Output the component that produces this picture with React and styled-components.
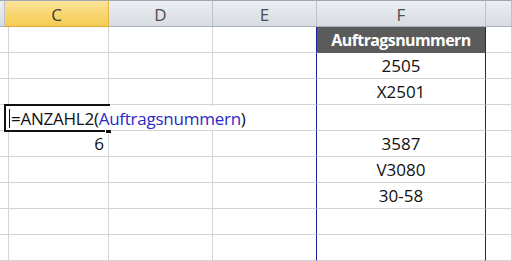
import React from 'react';
import styled, { createGlobalStyle } from 'styled-components';

const GlobalStyle = createGlobalStyle`
  html, body {
    margin: 0;
    padding: 0;
    background: #ffffff;
  }
  * {
    box-sizing: border-box;
  }
`;

const COLS = ['5px', '104px', '104px', '104px', '169px', '26px'];

const Sheet = styled.div`
  width: 512px;
  height: 261px;
  overflow: hidden;
  font-family: 'Open Sans', 'Liberation Sans', sans-serif;
  position: relative;
  background: #ffffff;
`;

const Row = styled.div`
  display: grid;
  grid-template-columns: ${COLS.join(' ')};
  height: ${({ h }) => h || 26}px;
`;

const HeadCell = styled.div`
  display: flex;
  align-items: center;
  justify-content: center;
  font-size: 17px;
  color: ${({ selected }) => (selected ? '#3b3b3b' : '#4a4f56')};
  background: ${({ selected }) =>
    selected
      ? 'linear-gradient(#fbe49a, #f8d56a 60%, #f5cb55)'
      : 'linear-gradient(#eceff3, #dfe3e8 60%, #d9dde2)'};
  border-top: 1px solid #9ea6b0;
  border-right: 1px solid ${({ selected }) => (selected ? '#e2b544' : '#bcc2ca')};
  border-bottom: 1px solid ${({ selected }) => (selected ? '#e0a93a' : '#a9b0b8')};
  padding-top: 1px;
`;

const Cell = styled.div`
  display: flex;
  align-items: center;
  justify-content: ${({ align }) => align || 'flex-start'};
  padding: 0 4px;
  font-size: 17px;
  color: #111111;
  border-right: 1px solid ${({ edge }) => (edge ? '#1d1d9a' : '#d4d4d4')};
  border-bottom: 1px solid #d4d4d4;
  position: relative;
`;

const TitleCell = styled(Cell)`
  background: #5b5b5b;
  color: #ffffff;
  font-weight: 700;
  font-size: 16px;
  letter-spacing: -0.6px;
  border-bottom-color: #5b5b5b;
`;

const ActiveCell = styled(Cell)`
  overflow: visible;
  z-index: 2;
`;

const ActiveFrame = styled.div`
  position: absolute;
  left: -1px;
  top: -1px;
  width: 106px;
  height: 28px;
  border: 2px solid #111111;
  border-right: 0;
  pointer-events: none;

  &::after {
    content: '';
    position: absolute;
    right: -2px;
    bottom: -4px;
    width: 5px;
    height: 5px;
    background: #111111;
    border: 1px solid #ffffff;
  }
`;

const Editor = styled.div`
  position: absolute;
  left: 2px;
  top: 1px;
  height: 24px;
  padding: 0 6px 0 2px;
  display: flex;
  align-items: center;
  background: #ffffff;
  white-space: nowrap;
  font-size: 17px;
  letter-spacing: -0.25px;
  color: #111111;
`;

const Caret = styled.span`
  display: inline-block;
  width: 1px;
  height: 19px;
  background: #111111;
  margin-right: 1px;
`;

const Ref = styled.span`
  color: #2b2bc4;
`;

const headers = [
  { label: '', selected: false },
  { label: 'C', selected: true },
  { label: 'D' },
  { label: 'E' },
  { label: 'F' },
  { label: '' },
];

const values = [
  { text: 'Auftragsnummern', title: true },
  { text: '2505' },
  { text: 'X2501' },
  { text: '', editing: true },
  { text: '3587', count: '6' },
  { text: 'V3080' },
  { text: '30-58' },
  { text: '' },
  { text: '' },
];

function App() {
  return (
    <>
      <GlobalStyle />
      <Sheet>
        <Row h={27}>
          {headers.map((h, i) => (
            <HeadCell key={i} selected={h.selected}>{h.label}</HeadCell>
          ))}
        </Row>
        {values.map((v, i) => (
          <Row key={i}>
            <Cell />
            {v.editing ? (
              <ActiveCell>
                <ActiveFrame />
                <Editor>
                  <Caret />=ANZAHL2(<Ref>Auftragsnummern</Ref>)
                </Editor>
              </ActiveCell>
            ) : (
              <Cell align="flex-end">{v.count}</Cell>
            )}
            <Cell />
            <Cell edge />
            {v.title ? (
              <TitleCell align="center" edge>{v.text}</TitleCell>
            ) : (
              <Cell align="center" edge>{v.text}</Cell>
            )}
            <Cell />
          </Row>
        ))}
      </Sheet>
    </>
  );
}

export default App;
